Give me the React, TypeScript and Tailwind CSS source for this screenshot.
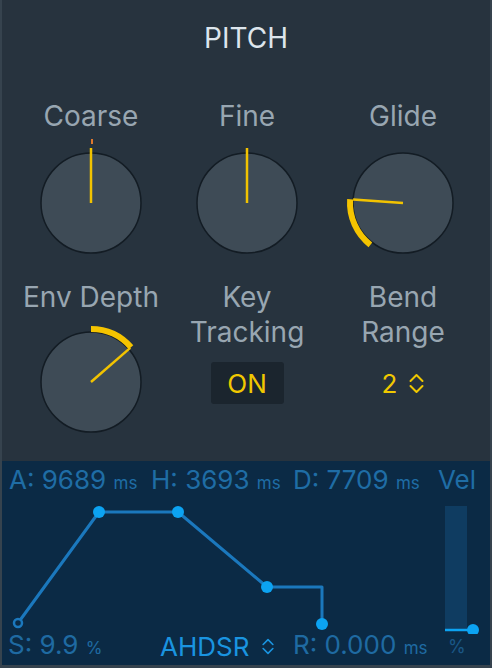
import React from 'react';

const C = 65;

const pt = (r: number, deg: number) => {
  const a = (deg * Math.PI) / 180;
  return [C + r * Math.sin(a), C - r * Math.cos(a)];
};

const arcPath = (r: number, a1: number, a2: number) => {
  const [x1, y1] = pt(r, a1);
  const [x2, y2] = pt(r, a2);
  const large = a2 - a1 > 180 ? 1 : 0;
  return `M ${x1} ${y1} A ${r} ${r} 0 ${large} 1 ${x2} ${y2}`;
};

interface KnobProps {
  angle: number;
  arcFrom?: number;
  pointerLen?: number;
  centerMark?: boolean;
}

const Knob: React.FC<KnobProps> = ({ angle, arcFrom, pointerLen = 55, centerMark }) => {
  const [px, py] = pt(pointerLen, angle);
  return (
    <svg width="130" height="130" viewBox="0 0 130 130" className="block">
      <circle cx={C} cy={C} r="50" fill="#3e4b56" stroke="#131c24" strokeWidth="1.5" />
      {arcFrom !== undefined && (
        <path
          d={arcFrom < angle ? arcPath(53, arcFrom, angle) : arcPath(53, angle, arcFrom)}
          fill="none"
          stroke="#f5c400"
          strokeWidth="6"
        />
      )}
      {centerMark && <rect x={C} y={C - 64} width="2" height="5" fill="#e0782e" />}
      <line x1={C} y1={C} x2={px} y2={py} stroke="#f2c300" strokeWidth="2.5" />
    </svg>
  );
};

const Chevrons: React.FC<{ color: string; w?: number; h?: number }> = ({ color, w = 15, h = 21 }) => (
  <svg width={w} height={h} viewBox="0 0 15 21" className="block">
    <path d="M1.5 8 L7.5 2 L13.5 8" fill="none" stroke={color} strokeWidth="2" strokeLinecap="round" strokeLinejoin="round" />
    <path d="M1.5 13 L7.5 19 L13.5 13" fill="none" stroke={color} strokeWidth="2" strokeLinecap="round" strokeLinejoin="round" />
  </svg>
);

const Label: React.FC<{ children: React.ReactNode }> = ({ children }) => (
  <div className="text-[28px] leading-[35px] text-[#98a6b1] text-center">{children}</div>
);

export default function App() {
  const line = '#1b78bd';
  const dot = '#0ca3f2';
  return (
    <div
      className="w-[492px] h-[668px] bg-[#27333e] border-x-2 border-b-[3px] border-[#36434e] flex flex-col overflow-hidden"
      style={{ fontFamily: 'Inter, "Noto Sans", sans-serif' }}
    >
      <div className="h-[461px] flex-none">
        <div className="pt-[21px] text-[28px] leading-[34px] text-[#dde5ec] text-center">PITCH</div>

        <div className="mt-[44px] px-[11px] grid grid-cols-[156px_156px_156px]">
          <div className="flex flex-col items-center">
            <Label>Coarse</Label>
            <div className="mt-[4px]">
              <Knob angle={0} centerMark />
            </div>
          </div>
          <div className="flex flex-col items-center">
            <Label>Fine</Label>
            <div className="mt-[4px]">
              <Knob angle={0} />
            </div>
          </div>
          <div className="flex flex-col items-center">
            <Label>Glide</Label>
            <div className="mt-[4px]">
              <Knob angle={-86} arcFrom={-142} pointerLen={50} />
            </div>
          </div>
        </div>

        <div className="mt-[12px] px-[11px] grid grid-cols-[156px_156px_156px]">
          <div className="flex flex-col items-center">
            <Label>Env Depth</Label>
            <div className="mt-[2px]">
              <Knob angle={49} arcFrom={0} pointerLen={52} />
            </div>
          </div>
          <div className="flex flex-col items-center">
            <Label>
              Key
              <br />
              Tracking
            </Label>
            <div className="mt-[12px] w-[73px] h-[42px] rounded-[3px] bg-[#1b252e] flex items-center justify-center text-[26px] text-[#f0c800]">
              ON
            </div>
          </div>
          <div className="flex flex-col items-center">
            <Label>
              Bend
              <br />
              Range
            </Label>
            <div className="mt-[12px] h-[42px] flex items-center gap-[12px] text-[26px] text-[#f0c800]">
              <span>2</span>
              <Chevrons color="#f0c800" />
            </div>
          </div>
        </div>
      </div>

      <div className="flex-1 bg-[#0b2a45] flex flex-col">
        <div className="pt-[4px] pl-[7px] flex text-[26px] leading-[30px] text-[#1f6da5] whitespace-nowrap">
          <div className="w-[142px]">
            A: 9689 <span className="text-[17px]">ms</span>
          </div>
          <div className="w-[142px]">
            H: 3693 <span className="text-[17px]">ms</span>
          </div>
          <div className="w-[145px]">
            D: 7709 <span className="text-[17px]">ms</span>
          </div>
          <div>Vel</div>
        </div>

        <svg width="488" height="136" viewBox="0 0 488 136" className="block">
          <rect x="443" y="8" width="22" height="124" fill="#0f3c61" />
          <line x1="443" y1="132" x2="471" y2="132" stroke={dot} strokeWidth="2.5" />
          <circle cx="471" cy="132" r="6" fill={dot} />
          <polyline
            points="16,125 97,14 176,14 265,89 320,89 320,126"
            fill="none"
            stroke={line}
            strokeWidth="3"
            strokeLinejoin="round"
          />
          <circle cx="16" cy="125" r="4" fill="#0b2a45" stroke={line} strokeWidth="2.5" />
          <circle cx="97" cy="14" r="6" fill={dot} />
          <circle cx="176" cy="14" r="6" fill={dot} />
          <circle cx="265" cy="89" r="6" fill={dot} />
          <circle cx="320" cy="126" r="6" fill={dot} />
        </svg>

        <div className="-mt-[4px] pl-[6px] flex items-center text-[26px] leading-[30px] text-[#1f6aa2] whitespace-nowrap">
          <div className="w-[152px]">
            S: 9.9 <span className="text-[17px]">%</span>
          </div>
          <div className="w-[133px] flex items-center text-[#1a94e0]">
            <span>AHDSR</span>
            <span className="ml-[12px]">
              <Chevrons color="#1a94e0" w={14} h={17} />
            </span>
          </div>
          <div className="w-[155px]">
            R: 0.000 <span className="text-[17px]">ms</span>
          </div>
          <div className="text-[18px] text-[#1a5786]">%</div>
        </div>
      </div>
    </div>
  );
}
